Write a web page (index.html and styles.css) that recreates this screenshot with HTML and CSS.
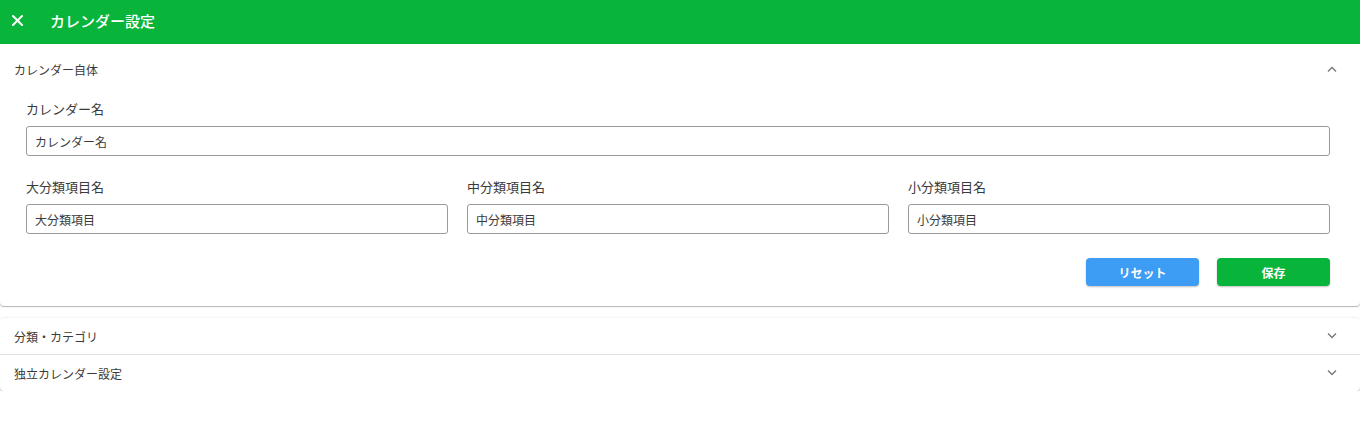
FILE: index.html
```html
<!DOCTYPE html>
<html lang="ja">
<head>
<meta charset="utf-8">
<title>カレンダー設定</title>
<link rel="stylesheet" href="styles.css">
</head>
<body>
<header class="toolbar">
  <button class="close-btn" aria-label="閉じる">
    <svg width="11" height="11" viewBox="0 0 11 11"><path d="M1 1 L10 10 M10 1 L1 10" stroke="#fff" stroke-width="2" stroke-linecap="square"/></svg>
  </button>
  <h1 class="title">カレンダー設定</h1>
</header>

<main class="panels">
  <section class="panel panel-open">
    <div class="panel-header">
      <span>カレンダー自体</span>
      <svg class="chev" width="10" height="6" viewBox="0 0 10 6"><path d="M1 5.5 L5 1.5 L9 5.5" fill="none" stroke="#777" stroke-width="1.3"/></svg>
    </div>
    <div class="panel-content">
      <div class="field">
        <label class="field-label">カレンダー名</label>
        <div class="input">カレンダー名</div>
      </div>
      <div class="field-row">
        <div class="field">
          <label class="field-label">大分類項目名</label>
          <div class="input">大分類項目</div>
        </div>
        <div class="field">
          <label class="field-label">中分類項目名</label>
          <div class="input">中分類項目</div>
        </div>
        <div class="field">
          <label class="field-label">小分類項目名</label>
          <div class="input">小分類項目</div>
        </div>
      </div>
      <div class="actions">
        <button class="btn btn-blue">リセット</button>
        <button class="btn btn-green">保存</button>
      </div>
    </div>
  </section>

  <section class="panel-group">
    <div class="panel-header row-divider">
      <span>分類・カテゴリ</span>
      <svg class="chev" width="10" height="6" viewBox="0 0 10 6"><path d="M1 0.5 L5 4.5 L9 0.5" fill="none" stroke="#777" stroke-width="1.3"/></svg>
    </div>
    <div class="panel-header">
      <span>独立カレンダー設定</span>
      <svg class="chev" width="10" height="6" viewBox="0 0 10 6"><path d="M1 0.5 L5 4.5 L9 0.5" fill="none" stroke="#777" stroke-width="1.3"/></svg>
    </div>
  </section>
</main>
</body>
</html>
```

FILE: styles.css
```css
* { box-sizing: border-box; }
body {
  margin: 0;
  background: #fff;
  font-family: Roboto, "Noto Sans CJK JP", sans-serif;
  color: #3a3a3a;
}
.toolbar {
  height: 44px;
  background: #09b43b;
  display: flex;
  align-items: center;
  padding-left: 11px;
}
.close-btn {
  background: none;
  border: 0;
  padding: 0;
  width: 12px;
  height: 12px;
  display: flex;
  align-items: center;
  justify-content: center;
  margin-top: -3px;
}
.title {
  margin: 0 0 0 27px;
  color: #fff;
  font-size: 15px;
  font-weight: 500;
  margin-top: -3px;
}
.panels { display: flex; flex-direction: column; }
.panel, .panel-group {
  background: #fff;
  border-radius: 0 0 4px 4px;
  box-shadow: 0 1px 1px rgba(0,0,0,0.28), 0 0 2px rgba(0,0,0,0.08);
}
.panel-group {
  margin-top: 12px;
  border-radius: 4px;
  box-shadow: 0 1px 1px rgba(0,0,0,0.28), 0 -1px 2px rgba(0,0,0,0.05);
}
.panel-header {
  display: flex;
  align-items: center;
  justify-content: space-between;
  padding: 0 23px 0 14px;
  height: 36px;
  font-size: 12px;
  color: #3a3a3a;
}
.panel-open > .panel-header { height: 50px; }
.row-divider { border-bottom: 1px solid #e0e0e0; height: 37px; }
.panel-content {
  padding: 8px 30px 20px 26px;
}
.field { display: flex; flex-direction: column; }
.field-label {
  font-size: 13px;
  line-height: 16px;
  color: #3a3a3a;
  margin-bottom: 8px;
}
.input {
  height: 30px;
  border: 1px solid #9a9a9a;
  border-radius: 3px;
  font-size: 12px;
  padding: 0 8px;
  display: flex;
  align-items: center;
  color: #3a3a3a;
}
.field-row {
  display: grid;
  grid-template-columns: 1fr 1fr 1fr;
  column-gap: 19px;
  margin-top: 24px;
}
.actions {
  display: flex;
  justify-content: flex-end;
  gap: 18px;
  margin-top: 24px;
}
.btn {
  width: 113px;
  height: 28px;
  border: 0;
  border-radius: 4px;
  color: #fff;
  font-family: inherit;
  font-size: 12px;
  font-weight: 700;
  box-shadow: 0 1px 2px rgba(0,0,0,0.25);
}
.btn-blue { background: #3d9cf3; }
.btn-green { background: #09b43b; }
```
